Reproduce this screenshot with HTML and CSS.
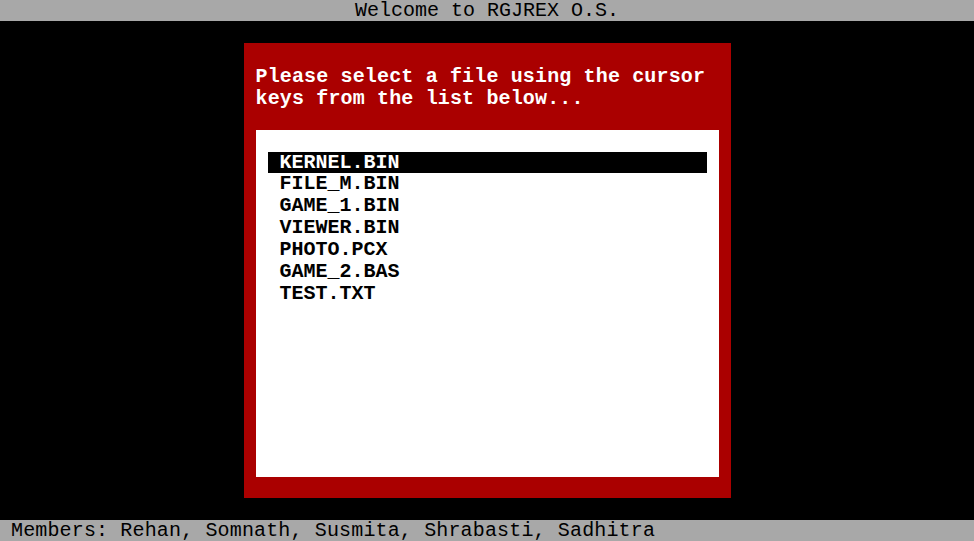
FILE: index.html
```html
<!DOCTYPE html>
<html>
<head>
<meta charset="utf-8">
<link rel="stylesheet" href="styles.css">
</head>
<body>
<div class="screen">
  <header class="bar top">Welcome to RGJREX O.S.</header>
  <main class="main">
    <section class="dialog">
      <p class="prompt">Please select a file using the cursor<br>keys from the list below...</p>
      <div class="panel">
        <ul class="files">
          <li class="sel">KERNEL.BIN</li>
          <li>FILE_M.BIN</li>
          <li>GAME_1.BIN</li>
          <li>VIEWER.BIN</li>
          <li>PHOTO.PCX</li>
          <li>GAME_2.BAS</li>
          <li>TEST.TXT</li>
        </ul>
      </div>
    </section>
  </main>
  <footer class="bar bottom">Members: Rehan, Somnath, Susmita, Shrabasti, Sadhitra</footer>
</div>
</body>
</html>
```

FILE: styles.css
```css
html, body {
  margin: 0;
  padding: 0;
  background: #000;
}
.screen {
  width: 974px;
  height: 541px;
  display: flex;
  flex-direction: column;
  font-family: "Liberation Mono", "DejaVu Sans Mono", monospace;
}
.bar {
  height: 21px;
  flex: none;
  background: #a8a8a8;
  color: #000;
  font-size: 20px;
  line-height: 21px;
  white-space: pre;
}
.top {
  text-align: center;
}
.bottom {
  padding-left: 11px;
  letter-spacing: 0.15px;
}
.main {
  flex: 1;
  display: flex;
  align-items: center;
  justify-content: center;
}
.dialog {
  box-sizing: border-box;
  width: 487px;
  height: 455px;
  background: #aa0000;
  padding: 23px 12px 21px 12px;
  display: flex;
  flex-direction: column;
}
.prompt {
  margin: 0;
  color: #fff;
  font-weight: bold;
  font-size: 20px;
  line-height: 22px;
  letter-spacing: 0.15px;
  white-space: pre;
}
.panel {
  margin-top: 20px;
  flex: 1;
  background: #fff;
  padding: 22px 12px 0 12px;
}
.files {
  list-style: none;
  margin: 0;
  padding: 0;
  font-size: 20px;
  font-weight: bold;
  line-height: 22px;
  color: #000;
}
.files li {
  height: 22px;
  padding-left: 12px;
}
.files li.sel {
  background: #000;
  color: #fff;
  height: 21px;
  line-height: 21px;
}
```
